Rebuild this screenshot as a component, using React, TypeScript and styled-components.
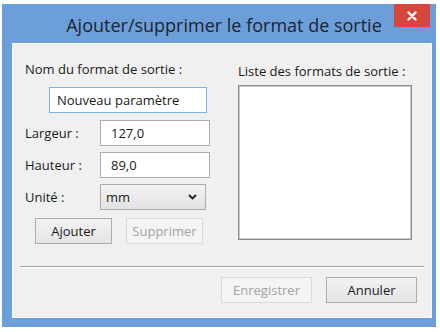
import React from 'react';
import styled, { createGlobalStyle } from "styled-components";

const GlobalStyle = createGlobalStyle`
    body {
        margin: 0;
        background: #ffffff;
        font-family: "Open Sans", "Liberation Sans", sans-serif;
    }
`

const Window = styled.div`
    margin: 4px 0 0 2px;
    width: 434px;
    height: 323px;
    background-color: #6c9fd9;
    display: flex;
    flex-direction: column;
    padding: 0 4px 9px 10px;
    box-sizing: border-box;
`

const TitleBar = styled.div`
    position: relative;
    height: 39px;
    display: flex;
    align-items: center;
    justify-content: center;
`

const Title = styled.div`
    font-size: 18px;
    color: #1c2430;
    margin-top: 2px;
    margin-left: 4px;
`

const CloseButton = styled.div`
    position: absolute;
    top: 0;
    right: 2px;
    width: 36px;
    height: 23px;
    background-color: #d6463c;
    display: flex;
    align-items: center;
    justify-content: center;
`

const Panel = styled.div`
    flex: 1;
    background-color: #f0f0f0;
    border: 1px solid #fbfbfb;
    box-sizing: border-box;
    display: flex;
    flex-direction: column;
    font-size: 13px;
    color: #1a1a1a;
`

const TopArea = styled.div`
    height: 222px;
    box-sizing: border-box;
    padding: 17px 0 0 12px;
    display: flex;
    gap: 28px;
`

const LeftColumn = styled.div`
    width: 185px;
    display: flex;
    flex-direction: column;
`

const RightColumn = styled.div`
    display: flex;
    flex-direction: column;
`

const Label = styled.div`
    height: 16px;
    line-height: 16px;
    white-space: nowrap;
`

const TextInput = styled.div<{ focused?: boolean; width: number }>`
    width: ${props => props.width}px;
    height: 26px;
    box-sizing: border-box;
    border: 1px solid ${props => props.focused ? "#7eb4ea" : "#abadb3"};
    background: #ffffff;
    padding-left: 10px;
    display: flex;
    align-items: center;
    font-size: 13px;
`

const NameInput = styled(TextInput)`
    margin: 10px 0 0 24px;
    padding-left: 7px;
`

const FieldRow = styled.div`
    display: flex;
    align-items: center;
    margin-top: 6px;
`

const FieldLabel = styled.div`
    width: 75px;
`

const Select = styled.div`
    width: 106px;
    height: 26px;
    box-sizing: border-box;
    border: 1px solid #acacac;
    background: linear-gradient(#f2f2f2, #e3e3e3);
    display: flex;
    align-items: center;
    justify-content: space-between;
    padding: 0 8px 0 5px;
`

const ButtonRow = styled.div`
    display: flex;
    gap: 14px;
    margin: 8px 0 0 10px;
`

const Button = styled.div<{ disabled?: boolean; width: number }>`
    width: ${props => props.width}px;
    height: 26px;
    box-sizing: border-box;
    border: 1px solid ${props => props.disabled ? "#d9d9d9" : "#adadad"};
    background: ${props => props.disabled ? "#f4f4f4" : "linear-gradient(#f2f2f2, #e5e5e5)"};
    color: ${props => props.disabled ? "#a3a3a3" : "#1a1a1a"};
    display: flex;
    align-items: center;
    justify-content: center;
    font-size: 13px;
`

const ListBox = styled.div`
    margin-top: 6px;
    width: 174px;
    height: 155px;
    box-sizing: border-box;
    background: #ffffff;
    border: 1px solid #8c8c8c;
    box-shadow: inset 0 0 0 1px #c8c8c8;
`

const Separator = styled.div`
    margin: 0 7px 0 7px;
    height: 1px;
    background-color: #a0a0a0;
    border-bottom: 1px solid #ffffff;
`

const Footer = styled.div`
    display: flex;
    justify-content: flex-end;
    gap: 14px;
    margin-top: 9px;
    padding-right: 14px;
`

export default function App() {
    return (
        <>
            <GlobalStyle/>
            <Window>
                <TitleBar>
                    <Title>Ajouter/supprimer le format de sortie</Title>
                    <CloseButton>
                        <svg width="10" height="10" viewBox="0 0 10 10">
                            <path d="M1.5 1.5 L8.5 8.5 M8.5 1.5 L1.5 8.5" stroke="#ffffff" strokeWidth="2.4" strokeLinecap="round"/>
                        </svg>
                    </CloseButton>
                </TitleBar>
                <Panel>
                    <TopArea>
                        <LeftColumn>
                            <Label>Nom du format de sortie :</Label>
                            <NameInput focused width={158}>Nouveau paramètre</NameInput>
                            <FieldRow style={{ marginTop: 7 }}>
                                <FieldLabel>Largeur :</FieldLabel>
                                <TextInput width={110}>127,0</TextInput>
                            </FieldRow>
                            <FieldRow>
                                <FieldLabel>Hauteur :</FieldLabel>
                                <TextInput width={110}>89,0</TextInput>
                            </FieldRow>
                            <FieldRow>
                                <FieldLabel>Unité :</FieldLabel>
                                <Select>
                                    <span>mm</span>
                                    <svg width="9" height="6" viewBox="0 0 9 6">
                                        <path d="M1 1 L4.5 4.5 L8 1" stroke="#202020" strokeWidth="1.8" fill="none"/>
                                    </svg>
                                </Select>
                            </FieldRow>
                            <ButtonRow>
                                <Button width={77}>Ajouter</Button>
                                <Button width={77} disabled>Supprimer</Button>
                            </ButtonRow>
                        </LeftColumn>
                        <RightColumn>
                            <Label style={{ marginTop: 2 }}>Liste des formats de sortie :</Label>
                            <ListBox/>
                        </RightColumn>
                    </TopArea>
                    <Separator/>
                    <Footer>
                        <Button width={91} disabled>Enregistrer</Button>
                        <Button width={91}>Annuler</Button>
                    </Footer>
                </Panel>
            </Window>
        </>
    );
}
